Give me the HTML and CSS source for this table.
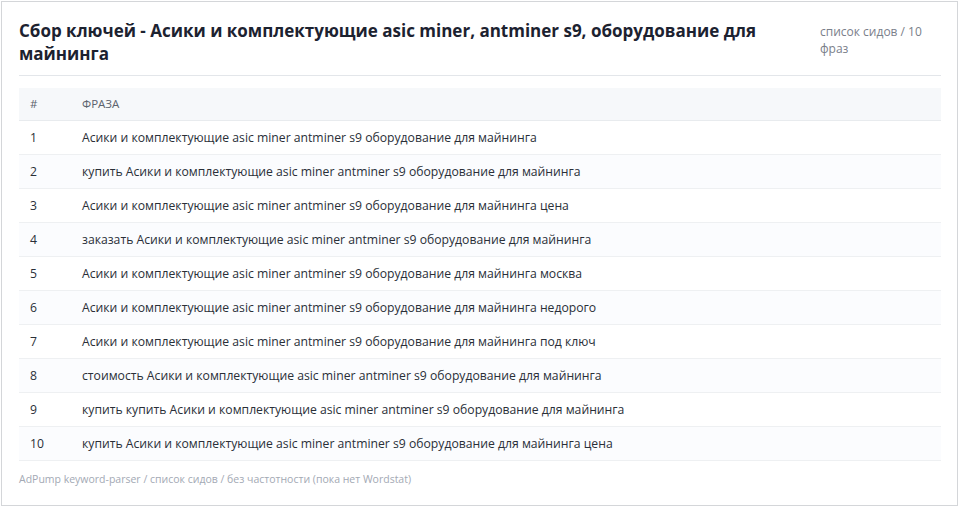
FILE: index.html
```html
<!DOCTYPE html>
<html lang="ru">
<head>
    <meta charset="UTF-8">
    <meta name="viewport" content="width=device-width, initial-scale=1.0">
    <title>Сбор ключей</title>
    <link rel="stylesheet" href="styles.css">
</head>
<body>
    <div class="card">
        <div class="header">
            <h1 class="title">Сбор ключей - Асики и комплектующие asic miner, antminer s9, оборудование для майнинга</h1>
            <div class="meta">список сидов / 10 фраз</div>
        </div>

        <table class="phrases">
            <colgroup>
                <col class="num-col">
                <col>
            </colgroup>
            <thead>
                <tr>
                    <th>#</th>
                    <th>Фраза</th>
                </tr>
            </thead>
            <tbody>
                <tr><td>1</td><td>Асики и комплектующие asic miner antminer s9 оборудование для майнинга</td></tr>
                <tr><td>2</td><td>купить Асики и комплектующие asic miner antminer s9 оборудование для майнинга</td></tr>
                <tr><td>3</td><td>Асики и комплектующие asic miner antminer s9 оборудование для майнинга цена</td></tr>
                <tr><td>4</td><td>заказать Асики и комплектующие asic miner antminer s9 оборудование для майнинга</td></tr>
                <tr><td>5</td><td>Асики и комплектующие asic miner antminer s9 оборудование для майнинга москва</td></tr>
                <tr><td>6</td><td>Асики и комплектующие asic miner antminer s9 оборудование для майнинга недорого</td></tr>
                <tr><td>7</td><td>Асики и комплектующие asic miner antminer s9 оборудование для майнинга под ключ</td></tr>
                <tr><td>8</td><td>стоимость Асики и комплектующие asic miner antminer s9 оборудование для майнинга</td></tr>
                <tr><td>9</td><td>купить купить Асики и комплектующие asic miner antminer s9 оборудование для майнинга</td></tr>
                <tr><td>10</td><td>купить Асики и комплектующие asic miner antminer s9 оборудование для майнинга цена</td></tr>
            </tbody>
        </table>

        <div class="footer">AdPump keyword-parser / список сидов / без частотности (пока нет Wordstat)</div>
    </div>
</body>
</html>
```

FILE: styles.css
```css
* {
    margin: 0;
    padding: 0;
    box-sizing: border-box;
}

body {
    font-family: 'Open Sans', 'Noto Sans', sans-serif;
    color: #222;
    background: #fff;
    padding: 1px;
}

.card {
    height: 505px;
    width: 957px;
    border: 1px solid #d4d6d9;
    padding: 17px 16px 0 17px;
}

.header {
    display: flex;
    gap: 60px;
    padding-bottom: 10px;
    border-bottom: 1px solid #e3e6ea;
}

.title {
    flex: 1;
    font-size: 17px;
    font-weight: 700;
    line-height: 23px;
    color: #1c2230;
}

.meta {
    width: 104px;
    margin-right: 17px;
    padding-top: 4px;
    font-size: 12px;
    line-height: 17px;
    color: #7a808a;
}

.phrases {
    width: 100%;
    margin-top: 12px;
    border-collapse: collapse;
    table-layout: fixed;
    font-size: 12.2px;
    color: #2a2f38;
}

.num-col {
    width: 52px;
}

.phrases th {
    height: 32px;
    background: #f6f8fa;
    text-align: left;
    font-size: 11.5px;
    font-weight: 400;
    text-transform: uppercase;
    color: #5c636e;
    border-bottom: 1px solid #e8ebee;
    padding-left: 11px;
}

.phrases td {
    height: 34px;
    padding-left: 11px;
    border-bottom: 1px solid #eef0f2;
}

.phrases tbody tr:nth-child(even) td {
    background: #fbfcfe;
}

.footer {
    padding-top: 11px;
    font-size: 10.5px;
    color: #a3a9b4;
}
```
